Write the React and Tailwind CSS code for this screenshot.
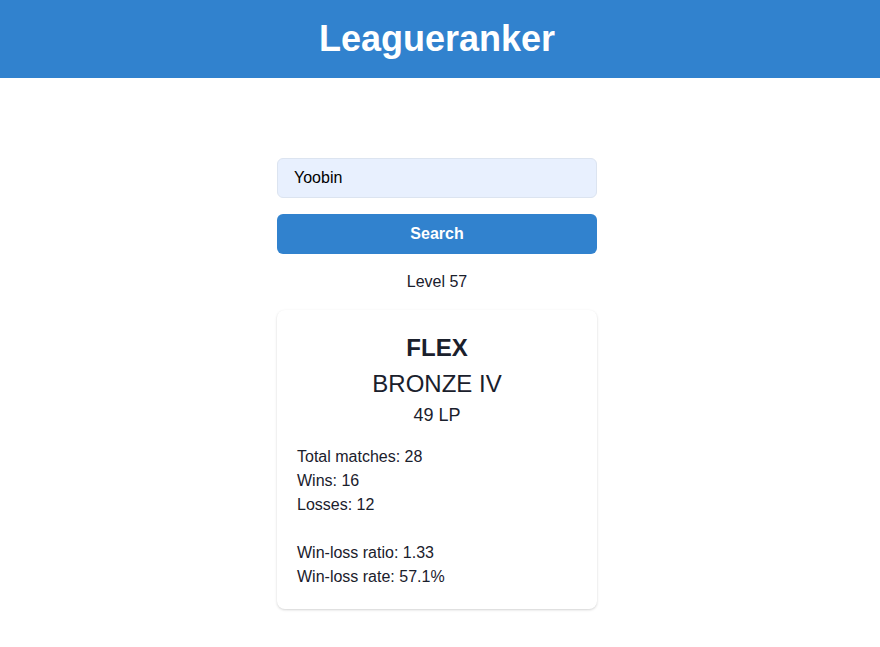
export default function App() {
  return (
    <div className="min-h-screen bg-white text-[#1a202c] font-['Liberation_Sans',Arial,sans-serif]">
      {/* Header */}
      <header className="h-[78px] bg-[#3182ce] flex items-center justify-center pr-[6px]">
        <h1 className="text-white text-[36px] font-bold leading-none">Leagueranker</h1>
      </header>

      <main className="flex flex-col items-center pt-[80px] pr-[6px]">
        <div className="w-[320px] flex flex-col">
          <input
            defaultValue="Yoobin"
            className="h-10 w-full rounded-md border border-[#dce4f0] bg-[#e8f0fe] px-4 text-base text-black outline-none"
          />
          <button className="mt-4 h-10 w-full rounded-md bg-[#3182ce] text-white text-base font-bold">
            Search
          </button>
          <p className="mt-4 text-center text-base leading-6">Level 57</p>

          {/* Rank card */}
          <div className="mt-4 rounded-lg bg-white p-5 shadow-[0_1px_3px_rgba(0,0,0,0.12),0_1px_2px_rgba(0,0,0,0.06)]">
            <h2 className="text-center text-2xl font-bold leading-9">FLEX</h2>
            <p className="text-center text-2xl leading-9">BRONZE IV</p>
            <p className="text-center text-lg leading-[26px]">49 LP</p>
            <div className="mt-[17px] text-base leading-6">
              <p>Total matches: 28</p>
              <p>Wins: 16</p>
              <p>Losses: 12</p>
              <br />
              <p>Win-loss ratio: 1.33</p>
              <p>Win-loss rate: 57.1%</p>
            </div>
          </div>
        </div>
      </main>
    </div>
  );
}
